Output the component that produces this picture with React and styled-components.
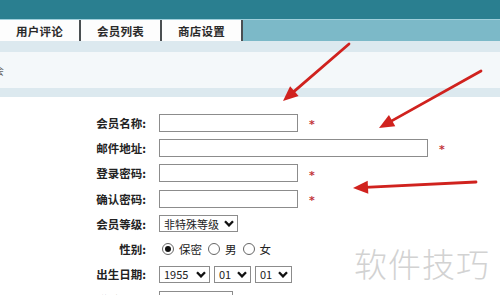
import React from "react";
import styled, { createGlobalStyle } from "styled-components";

const GlobalStyle = createGlobalStyle`
  html, body {
    margin: 0;
    padding: 0;
    background: #ffffff;
  }
  body {
    font-family: "Noto Sans CJK SC", "Liberation Sans", sans-serif;
    color: #222;
  }
`;

const Page = styled.div`
  position: relative;
  width: 500px;
  height: 295px;
  overflow: hidden;
  background: #fff;
`;

const TopBar = styled.div`
  height: 19px;
  background: #2a7f90;
  border-bottom: 1px solid #9fcfdb;
`;

const TabStrip = styled.div`
  display: flex;
  height: 21px;
  background: #7cb9c8;
`;

const Tab = styled.div`
  width: 79px;
  display: flex;
  align-items: center;
  justify-content: center;
  background: #fdfdfd;
  border-right: 2px solid #4a4f52;
  font-size: 11.5px;
  font-weight: 700;
  color: #2a2a2a;
  letter-spacing: 0.2px;
`;

const Band = styled.div`
  height: ${(p) => p.$h}px;
  background: #dce9ef;
`;

const InfoArea = styled.div`
  height: 36px;
  background: #f4f8fa;
  display: flex;
  align-items: center;
  font-size: 11px;
  color: #666;
`;

const CutChar = styled.span`
  margin-left: -7px;
`;

const Form = styled.div`
  display: grid;
  grid-template-columns: 146px auto;
  grid-auto-rows: 25.3px;
  column-gap: 13px;
  padding-top: 13px;
`;

const Label = styled.div`
  display: flex;
  align-items: center;
  justify-content: flex-end;
  font-size: 11.5px;
  font-weight: 700;
  color: #222;
`;

const Field = styled.div`
  display: flex;
  align-items: center;
  gap: ${(p) => p.$gap || 0}px;
`;

const TextInput = styled.div`
  box-sizing: border-box;
  width: ${(p) => p.$w}px;
  height: 18px;
  border: 1px solid #8c8c8c;
  background: #fff;
`;

const Star = styled.span`
  margin-left: 11px;
  font-family: "DejaVu Sans", sans-serif;
  font-size: 11px;
  font-weight: 700;
  color: #c2333a;
  line-height: 1;
  padding-top: 4px;
`;

const Select = styled.div`
  box-sizing: border-box;
  width: ${(p) => p.$w}px;
  height: 17px;
  border: 1px solid #8c8c8c;
  display: flex;
  align-items: center;
  justify-content: space-between;
  padding: 0 3px 0 4px;
  font-size: 11px;
  color: #222;
  background: #fff;
`;

const Chevron = () => (
  <svg width="10" height="7" viewBox="0 0 10 7">
    <path d="M1 1.2 L5 5.4 L9 1.2" fill="none" stroke="#111" strokeWidth="2.3" />
  </svg>
);

const RadioGroup = styled.div`
  display: flex;
  align-items: center;
  font-size: 11.5px;
  color: #222;
`;

const Radio = styled.span`
  box-sizing: border-box;
  width: 12px;
  height: 12px;
  border-radius: 50%;
  border: 1px solid #666;
  margin: 0 5px 0 ${(p) => p.$ml || 0}px;
  display: flex;
  align-items: center;
  justify-content: center;
  &::after {
    content: "";
    display: ${(p) => (p.$on ? "block" : "none")};
    width: 6px;
    height: 6px;
    border-radius: 50%;
    background: #111;
  }
`;

const Watermark = styled.div`
  position: absolute;
  left: 354px;
  top: 239px;
  font-size: 33px;
  font-weight: 300;
  color: #d2d2d2;
  letter-spacing: 1px;
`;

const Overlay = styled.svg`
  position: absolute;
  left: 0;
  top: 0;
  pointer-events: none;
`;

const arrows = [
  { x1: 349, y1: 44, x2: 283, y2: 101 },
  { x1: 481, y1: 71, x2: 379, y2: 128 },
  { x1: 476, y1: 182, x2: 353, y2: 188 },
];

function Arrow({ x1, y1, x2, y2 }) {
  const dx = x2 - x1;
  const dy = y2 - y1;
  const len = Math.hypot(dx, dy);
  const ux = dx / len;
  const uy = dy / len;
  const hl = 15;
  const hw = 6.5;
  const bx = x2 - ux * hl;
  const by = y2 - uy * hl;
  const px = -uy;
  const py = ux;
  const pts = `${x2},${y2} ${bx + px * hw},${by + py * hw} ${bx - px * hw},${by - py * hw}`;
  return (
    <g>
      <line x1={x1} y1={y1} x2={bx + ux * 3} y2={by + uy * 3} stroke="#d0221e" strokeWidth="2.8" strokeLinecap="round" />
      <polygon points={pts} fill="#d0221e" />
    </g>
  );
}

export default function App() {
  return (
    <Page>
      <GlobalStyle />
      <TopBar />
      <TabStrip>
        <Tab>用户评论</Tab>
        <Tab>会员列表</Tab>
        <Tab>商店设置</Tab>
      </TabStrip>
      <Band $h={11} />
      <InfoArea>
        <CutChar>会</CutChar>
      </InfoArea>
      <Band $h={9} />
      <Form>
        <Label>会员名称:</Label>
        <Field>
          <TextInput $w={139} />
          <Star>*</Star>
        </Field>

        <Label>邮件地址:</Label>
        <Field>
          <TextInput $w={269} />
          <Star>*</Star>
        </Field>

        <Label>登录密码:</Label>
        <Field>
          <TextInput $w={139} />
          <Star>*</Star>
        </Field>

        <Label>确认密码:</Label>
        <Field>
          <TextInput $w={139} />
          <Star>*</Star>
        </Field>

        <Label>会员等级:</Label>
        <Field>
          <Select $w={79}>
            非特殊等级
            <Chevron />
          </Select>
        </Field>

        <Label>性别:</Label>
        <Field>
          <RadioGroup>
            <Radio $on $ml={3} />
            保密
            <Radio $ml={6} />
            男
            <Radio $ml={6} />
            女
          </RadioGroup>
        </Field>

        <Label>出生日期:</Label>
        <Field $gap={4}>
          <Select $w={51}>
            1955
            <Chevron />
          </Select>
          <Select $w={37}>
            01
            <Chevron />
          </Select>
          <Select $w={37}>
            01
            <Chevron />
          </Select>
        </Field>

        <Label>联系电话:</Label>
        <Field>
          <TextInput $w={74} />
        </Field>
      </Form>
      <Watermark>软件技巧</Watermark>
      <Overlay width="500" height="295" viewBox="0 0 500 295">
        {arrows.map((a, i) => (
          <Arrow key={i} {...a} />
        ))}
      </Overlay>
    </Page>
  );
}
